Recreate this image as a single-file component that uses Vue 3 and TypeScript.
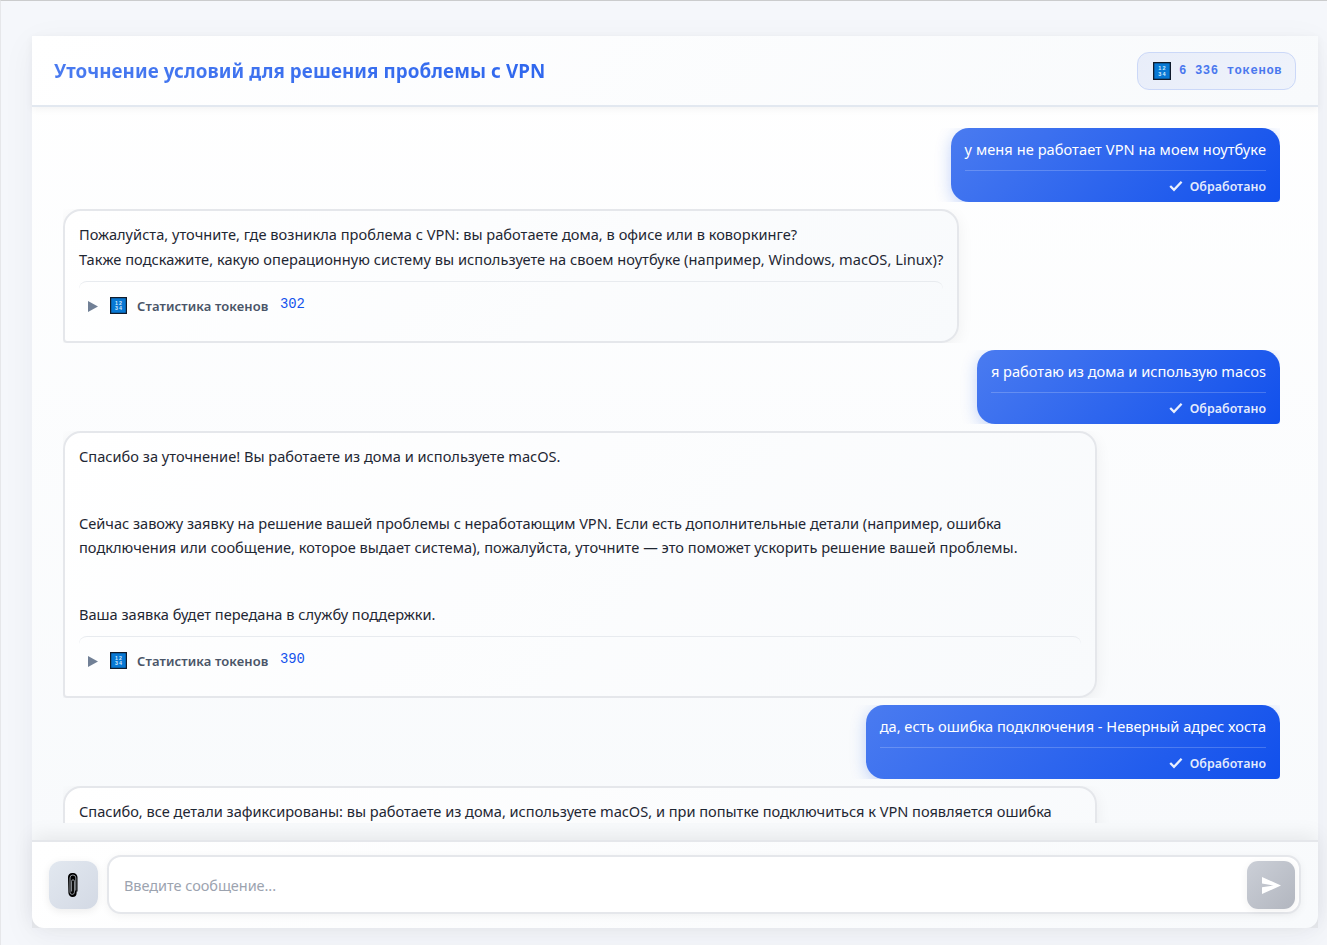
<script setup lang="ts">
interface Line {
  text: string
  tracking?: number
}
interface Message {
  id: number
  role: 'user' | 'assistant'
  lines: Line[]
  tokens?: string
  wide?: boolean
}

const messages: Message[] = [
  { id: 1, role: 'user', lines: [{ text: 'у меня не работает VPN на моем ноутбуке', tracking: 0.065 }] },
  {
    id: 2,
    role: 'assistant',
    lines: [
      { text: 'Пожалуйста, уточните, где возникла проблема с VPN: вы работаете дома, в офисе или в коворкинге?', tracking: 0.015 },
      { text: 'Также подскажите, какую операционную систему вы используете на своем ноутбуке (например, Windows, macOS, Linux)?', tracking: 0.038 },
    ],
    tokens: '302',
  },
  { id: 3, role: 'user', lines: [{ text: 'я работаю из дома и использую macos' }] },
  {
    id: 4,
    role: 'assistant',
    wide: true,
    lines: [
      { text: 'Спасибо за уточнение! Вы работаете из дома и используете macOS.', tracking: 0.01 },
      { text: '' },
      { text: 'Сейчас завожу заявку на решение вашей проблемы с неработающим VPN. Если есть дополнительные детали (например, ошибка', tracking: -0.028 },
      { text: 'подключения или сообщение, которое выдает система), пожалуйста, уточните — это поможет ускорить решение вашей проблемы.', tracking: 0.015 },
      { text: '' },
      { text: 'Ваша заявка будет передана в службу поддержки.', tracking: -0.015 },
    ],
    tokens: '390',
  },
  { id: 5, role: 'user', lines: [{ text: 'да, есть ошибка подключения - Неверный адрес хоста', tracking: -0.003 }] },
  {
    id: 6,
    role: 'assistant',
    wide: true,
    lines: [{ text: 'Спасибо, все детали зафиксированы: вы работаете из дома, используете macOS, и при попытке подключиться к VPN появляется ошибка', tracking: -0.014 }],
  },
]
</script>

<template>
  <div class="page">
    <section class="chat">
      <header class="head">
        <h1 class="title">Уточнение условий для решения проблемы с VPN</h1>
        <div class="badge">
          <svg class="num" viewBox="0 0 18 18"><rect width="18" height="18" fill="#111b2b" /><rect x="1.3" y="1.3" width="15.4" height="15.4" fill="#0878d4" /><text x="5.3" y="8">1</text><text x="9.6" y="8">2</text><text x="5.3" y="14">3</text><text x="9.6" y="14">4</text></svg>
          <span>6 336 токенов</span>
        </div>
      </header>

      <main class="feed">
        <div v-for="m in messages" :key="m.id" class="row" :class="m.role">
          <article class="bubble" :class="{ wide: m.wide }">
            <div class="body">
              <template v-for="(l, i) in m.lines" :key="i">
                <p v-if="l.text" class="line" :style="{ letterSpacing: (l.tracking ?? 0) + 'px' }">{{ l.text }}</p>
                <div v-else class="gap"></div>
              </template>
            </div>
            <div v-if="m.role === 'user'" class="status">
              <svg class="check" viewBox="0 0 14 12"><path d="M1.2 6 5 9.8 12.6 1.8" fill="none" stroke="currentColor" stroke-width="2.3" /></svg>
              <span>Обработано</span>
            </div>
            <div v-else-if="m.tokens" class="stats">
              <svg class="tri" viewBox="0 0 10 11"><path d="M0 0 10 5.5 0 11Z" fill="#718096" /></svg>
              <svg class="num" viewBox="0 0 18 18"><rect width="18" height="18" fill="#111b2b" /><rect x="1.3" y="1.3" width="15.4" height="15.4" fill="#0878d4" /><text x="5.3" y="8">1</text><text x="9.6" y="8">2</text><text x="5.3" y="14">3</text><text x="9.6" y="14">4</text></svg>
              <span class="label">Статистика токенов</span>
              <span class="count">{{ m.tokens }}</span>
            </div>
          </article>
        </div>
      </main>

      <footer class="composer">
        <button class="attach" type="button" aria-label="Прикрепить файл">
          <svg viewBox="0 0 12 26">
            <path d="M1 5.5A4.2 4.2 0 0 1 5.2 1h1A4.3 4.3 0 0 1 10.5 5.3V19.5H9.6V21a4 4 0 0 1-4 4A4.2 4.2 0 0 1 1.4 20.8Z" fill="#000" />
            <path d="M4.6 19.5V9.2a1.4 1.4 0 0 1 2.8 0v11a1.9 1.9 0 0 1-4.4 0V5.9a2.9 2.9 0 0 1 5.8 0V18.6" fill="none" stroke="#a3a8af" stroke-width=".9" />
          </svg>
        </button>
        <div class="field">
          <span class="placeholder">Введите сообщение...</span>
          <button class="send" type="button" aria-label="Отправить">
            <svg viewBox="0 0 19 17"><path d="M0 0 19 8.5 0 17V10.2L11.5 8.5 0 6.6Z" fill="#fff" /></svg>
          </button>
        </div>
      </footer>
    </section>
  </div>
</template>

<style>
body { margin: 0; overflow: hidden; }
</style>

<style scoped>
* { box-sizing: border-box; }
.page {
  height: 945px;
  padding: 35px 9px 0 31px;
  border-top: 1px solid #cbcccd;
  border-left: 1px solid #e6e7ea;
  background: #f5f7fb;
  font-family: "Noto Sans", "Open Sans", sans-serif;
  color: #1f2733;
}
.chat {
  height: 892px;
  display: flex;
  flex-direction: column;
  background: linear-gradient(180deg, #fff 0, #f8fafc 805px, #e6e8ec 806px);
  box-shadow: 0 8px 32px rgba(30, 41, 59, .05);
}
.head {
  position: relative;
  height: 71px;
  flex: none;
  display: flex;
  align-items: center;
  justify-content: space-between;
  padding: 0 22px;
  border-bottom: 2px solid #e2e8f0;
  background: linear-gradient(135deg, #fff, #f8fafc);
  box-shadow: 0 2px 8px rgba(0, 0, 0, .05);
}
.title {
  margin: 0;
  font-size: 18.8px;
  letter-spacing: .08px;
  font-weight: 700;
  line-height: 30px;
  color: transparent;
  background: linear-gradient(135deg, #4a7bf0, #1453ec);
  background-size: 1000px 100%;
  background-clip: text;
  -webkit-background-clip: text;
}
.badge {
  height: 38px;
  width: 159px;
  display: flex;
  align-items: center;
  gap: 8px;
  padding: 0 0 0 15px;
  border: 1px solid #cbd8f8;
  border-radius: 12px;
  background: linear-gradient(135deg, #e8edf9, #eff3fb);
  color: #4a78ee;
  font: 600 12.2px "Liberation Mono", monospace;
  letter-spacing: .63px;
  white-space: pre;
}
.num { width: 18px; height: 18px; flex: none; }
.num text { font: 700 5.5px "Liberation Sans", sans-serif; letter-spacing: 0; fill: #d5ebfb; }
.feed {
  height: 716px;
  flex: none;
  display: flex;
  flex-direction: column;
  gap: 7px;
  padding: 21px 38px 0 31px;
  overflow: hidden;
}
.row { display: flex; flex: none; overflow: hidden; }
.row.user { justify-content: flex-end; }
.bubble { max-width: 85%; font-size: 14.6px; white-space: nowrap; }
.bubble.wide { width: 85%; min-height: 180px; }
.user .bubble {
  height: 74px;
  padding: 9px 14px 0 13.6px;
  border-radius: 18px 18px 4px 18px;
  background: linear-gradient(135deg, #4a7bf0, #1150ec);
  box-shadow: 0 4px 16px rgba(20, 83, 236, .25);
  color: #fff;
}
.assistant .bubble {
  padding: 11px 14px 12px;
  border: 2px solid #e5e7eb;
  border-radius: 18px 18px 18px 4px;
  background: linear-gradient(135deg, #fff, #f8fafc);
  box-shadow: 0 4px 16px rgba(0, 0, 0, .06);
}
.line { margin: 0; line-height: 24.5px; }
.gap { height: 42px; }
.status {
  display: flex;
  align-items: center;
  justify-content: flex-end;
  gap: 7px;
  height: 32px;
  margin-top: 8.6px;
  border-top: 1px solid rgba(255, 255, 255, .2);
  font-size: 12.4px;
  letter-spacing: .03px;
  font-weight: 600;
  color: rgba(255, 255, 255, .9);
}
.check { width: 14px; height: 12px; margin-top: -1px; }
.stats {
  display: flex;
  align-items: center;
  height: 48px;
  margin-top: 10px;
  padding-left: 9px;
  border-top: 1px solid #e8ebef;
  border-radius: 8px;
}
.tri { width: 10px; height: 11px; margin: 1px 12px 0 0; }
.stats .num { width: 17px; height: 17px; }
.label { margin-left: 10px; font-size: 13px; letter-spacing: .1px; font-weight: 600; color: #4a5568; }
.count { margin: -3px 0 0 11.5px; font: 13.9px "Liberation Mono", monospace; color: #1453ec; }
.composer {
  position: relative;
  height: 88px;
  margin-top: auto;
  display: flex;
  align-items: center;
  gap: 9px;
  padding: 0 17px;
  border-top: 2px solid #e5e7eb;
  border-radius: 0 0 12px 12px;
  background: linear-gradient(135deg, #fff, #f8fafc);
  box-shadow: 0 -4px 20px rgba(0, 0, 0, .08);
}
button { border: 0; padding: 0; display: grid; place-items: center; }
.attach {
  width: 49px;
  height: 48px;
  border-radius: 12px;
  background: linear-gradient(135deg, #e2e8f0, #d3d9e4);
  box-shadow: 0 2px 8px rgba(0, 0, 0, .08);
}
.attach svg { width: 12px; height: 26px; margin-right: 1px; }
.field {
  flex: 1;
  height: 59px;
  margin-top: -1px;
  display: flex;
  align-items: center;
  justify-content: space-between;
  padding: 0 4px 0 15px;
  border: 2px solid #e5e7eb;
  border-radius: 14px;
  background: #fff;
  box-shadow: 0 2px 8px rgba(0, 0, 0, .05);
}
.placeholder { margin-top: 1px; font-size: 14.5px; letter-spacing: -.05px; color: #9ca3af; }
.send {
  width: 48px;
  height: 48px;
  margin-top: 1px;
  border-radius: 11px;
  background: linear-gradient(135deg, #cbcfd7, #b2b6bf);
  box-shadow: 0 2px 8px rgba(0, 0, 0, .06);
}
.send svg { width: 19px; height: 17px; }
</style>
